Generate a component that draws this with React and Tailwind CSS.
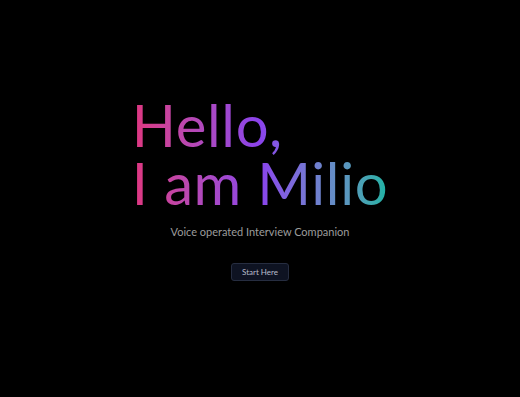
export default function App() {
    return (
        <div className="w-[520px] h-[397px] bg-black flex flex-col items-center font-['Lato',sans-serif]">
            <div className="!mt-[96px] text-left text-[58px] leading-[58px] font-normal bg-gradient-to-r from-[#e0357f] via-[#8a42ec] to-[#16b3a4] bg-clip-text text-transparent tracking-[0.6px]">
                <p>Hello,</p>
                <p>I am Milio</p>
            </div>
            <p className="!mt-[12px] text-[11px] text-[#9c9c9c]">Voice operated Interview Companion</p>
            <button className="!mt-[22px] h-[18px] !px-[10px] flex items-center rounded-[3px] bg-[#0e1322] border border-[#262d40] text-[8px] text-[#b8bccb]">
                Start Here
            </button>
        </div>
    )
}
